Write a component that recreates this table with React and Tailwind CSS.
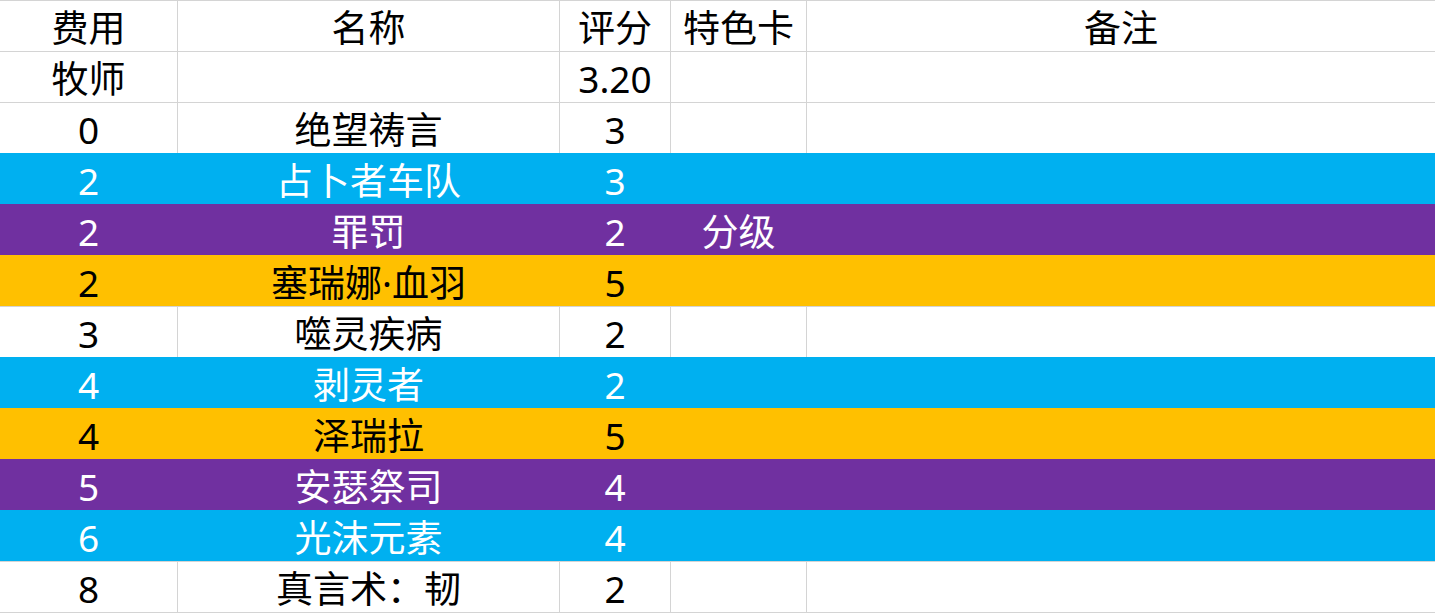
import React from "react";

const rows = [
  { c: ["费用", "名称", "评分", "特色卡", "备注"], t: "w" },
  { c: ["牧师", "", "3.20", "", ""], t: "w" },
  { c: ["0", "绝望祷言", "3", "", ""], t: "w" },
  { c: ["2", "占卜者车队", "3", "", ""], t: "b" },
  { c: ["2", "罪罚", "2", "分级", ""], t: "p" },
  { c: ["2", "塞瑞娜·血羽", "5", "", ""], t: "o" },
  { c: ["3", "噬灵疾病", "2", "", ""], t: "w" },
  { c: ["4", "剥灵者", "2", "", ""], t: "b" },
  { c: ["4", "泽瑞拉", "5", "", ""], t: "o" },
  { c: ["5", "安瑟祭司", "4", "", ""], t: "p" },
  { c: ["6", "光沫元素", "4", "", ""], t: "b" },
  { c: ["8", "真言术：韧", "2", "", ""], t: "w" },
];

const rowCls = {
  w: "bg-white text-black",
  b: "bg-[#00b0f0] text-white",
  p: "bg-[#7030a0] text-white",
  o: "bg-[#ffc000] text-black",
};
const borderCls = {
  w: "border-[#d4d4d4]",
  b: "border-[#00b0f0]",
  p: "border-[#7030a0]",
  o: "border-[#ffc000]",
};

export default function App() {
  return (
    <div
      className="w-[1435px] h-[613px] bg-white overflow-hidden"
      style={{ fontFamily: '"Noto Sans", "Noto Sans CJK SC", sans-serif' }}
    >
      {rows.map((r, i) => (
        <div
          key={i}
          className={`grid grid-cols-[178px_382px_111px_136px_1fr] ${rowCls[r.t]} ${
            i === rows.length - 1 ? "h-[52px]" : "h-[51px]"
          }`}
        >
          {r.c.map((c, j) => (
            <div
              key={j}
              className={`flex items-center justify-center border-t pt-[2px] text-[37px] leading-none ${
                j < 4 ? "border-r" : ""
              } ${i === rows.length - 1 ? "border-b" : ""} ${borderCls[r.t]}`}
            >
              {c}
            </div>
          ))}
        </div>
      ))}
    </div>
  );
}
